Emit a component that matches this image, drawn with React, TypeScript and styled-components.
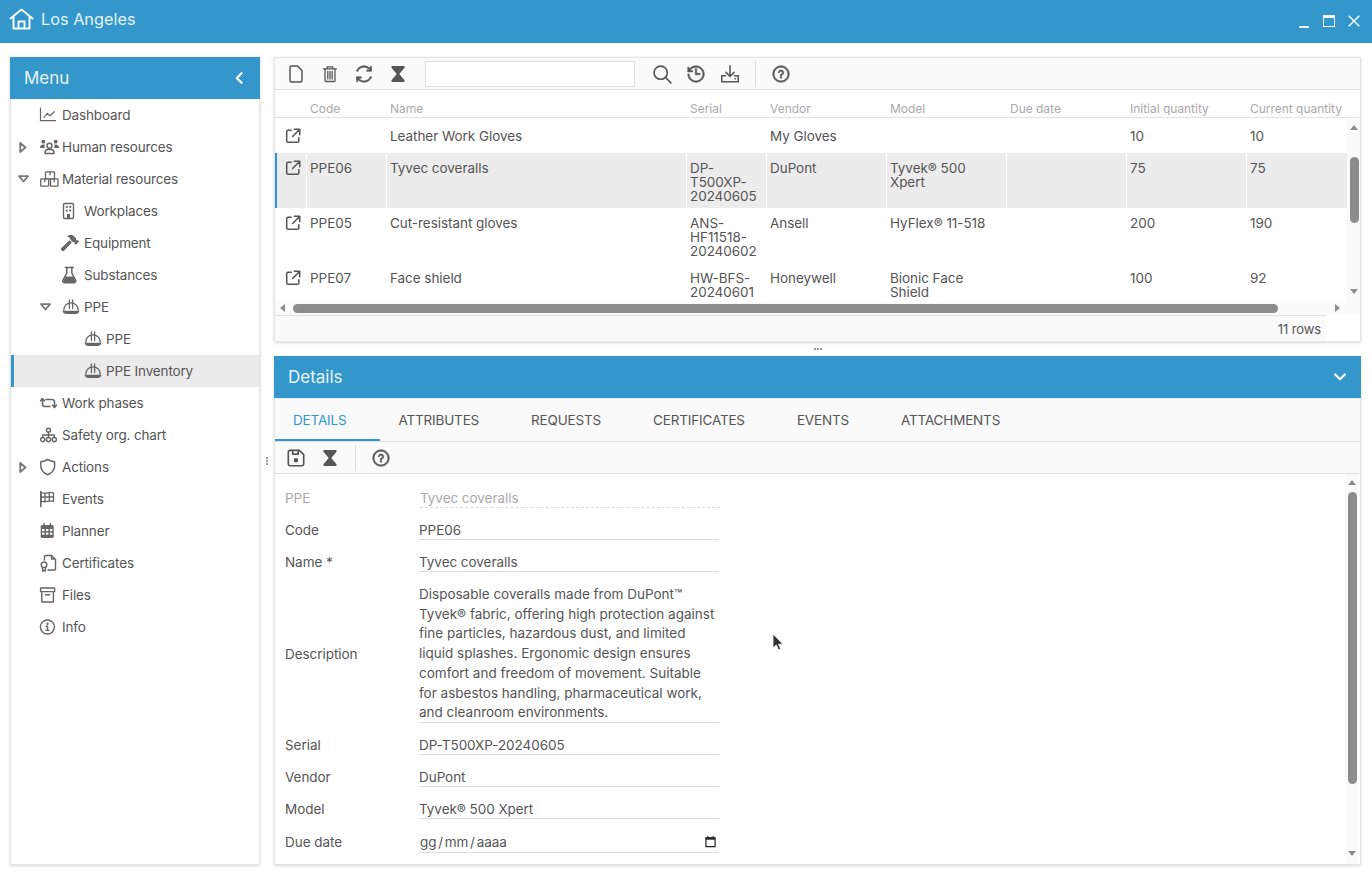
import React from "react";
import styled, { createGlobalStyle } from "styled-components";
import { FaHammer } from "react-icons/fa";
import { LiaSyncSolid, LiaHistorySolid, LiaQuestionCircle } from "react-icons/lia";

const Global = createGlobalStyle`
  html, body { margin: 0; padding: 0; background: #fff; }
  body { font-family: Inter, "Open Sans", sans-serif; color: #555; overflow: hidden; }
  * { box-sizing: border-box; }
`;

const Page = styled.div`
  position: relative;
  width: 1372px;
  height: 873px;
  display: flex;
  flex-direction: column;
`;
const TitleBar = styled.header`
  height: 43px;
  background: #3397cc;
  color: #fff;
  display: flex;
  align-items: center;
  padding: 0 12px 5px 9px;
  flex: none;
`;
const Title = styled.div`
  font-size: 16.3px;
  margin-left: 7px;
  color: #e6f3fa;
  flex: 1;
`;
const WinButtons = styled.div`
  display: flex;
  gap: 13px;
  align-items: center;
  padding-top: 3px;
`;
const Main = styled.main`
  flex: 1;
  display: flex;
  padding: 14px 11px 8px 10px;
  min-height: 0;
`;
const Sidebar = styled.aside`
  width: 250px;
  flex: none;
  display: flex;
  flex-direction: column;
  border: 1px solid #e4e4e4;
  border-top: 0;
  box-shadow: 0 1px 3px rgba(0, 0, 0, 0.16);
  background: #fff;
`;
const BlueHead = styled.div`
  height: 42px;
  flex: none;
  background: #3397cc;
  color: #e9f4fa;
  display: flex;
  align-items: center;
  justify-content: space-between;
  font-size: 17px;
`;
const MenuHead = styled(BlueHead)`
  margin: 0 -1px;
  padding: 0 17px 0 14px;
`;
const DetailsHead = styled(BlueHead)`
  padding: 0 15px 0 14px;
  margin: 0 -1px;
`;
const TreeRow = styled.div<{ $level: number; $active?: boolean }>`
  height: 32px;
  display: flex;
  align-items: center;
  font-size: 13.5px;
  letter-spacing: -0.15px;
  color: #555;
  padding-left: ${(p) => 5 + p.$level * 22}px;
  background: ${(p) => (p.$active ? "#ebebeb" : "transparent")};
  box-shadow: ${(p) => (p.$active ? "inset 3px 0 0 #3397cc" : "none")};
`;
const CaretSlot = styled.span`
  width: 24px;
  display: flex;
  justify-content: center;
  padding-right: 10px;
  flex: none;
`;
const TreeIcon = styled.span`
  width: 22px;
  height: 20px;
  flex: none;
  display: flex;
  align-items: center;
  color: #666;
  margin-left: -1px;
  margin-right: 1px;
`;
const VSplit = styled.div`
  width: 14px;
  flex: none;
  display: flex;
  flex-direction: column;
  align-items: center;
  justify-content: center;
  gap: 1px;
`;
const HSplit = styled.div`
  height: 14px;
  flex: none;
  display: flex;
  align-items: center;
  justify-content: center;
  gap: 1px;
`;
const Dot = styled.i`
  width: 2px;
  height: 2px;
  background: #999;
  display: block;
`;
const RightCol = styled.div`
  flex: 1;
  min-width: 0;
  display: flex;
  flex-direction: column;
`;
const Panel = styled.section`
  border: 1px solid #e4e4e4;
  border-top: 0;
  box-shadow: 0 1px 3px rgba(0, 0, 0, 0.14);
  display: flex;
  flex-direction: column;
  background: #fff;
`;
const GridPanel = styled(Panel)`
  height: 285px;
  flex: none;
  border-top: 1px solid #e4e4e4;
`;
const DetailPanel = styled(Panel)`
  flex: 1;
  min-height: 0;
`;
const Toolbar = styled.div`
  height: 32px;
  flex: none;
  background: #fafafa;
  border-bottom: 1px solid #e0e0e0;
  display: flex;
  align-items: center;
  padding-left: 4px;
`;
const ToolBtn = styled.span`
  width: 34px;
  height: 30px;
  flex: none;
  display: flex;
  align-items: center;
  justify-content: center;
  color: #555;
  font-size: 22px;
`;
const ThickBtn = styled(ToolBtn)`
  svg { stroke: currentColor; stroke-width: 0.9; }
`;
const SearchBox = styled.input`
  width: 210px;
  height: 26px;
  margin: 0 10px;
  border: 1px solid #e0e0e0;
  background: #fff;
  outline: 0;
`;
const Sep = styled.span`
  width: 1px;
  height: 26px;
  margin: 0 8px;
  background: #ddd;
  flex: none;
`;
const HeadRow = styled.div`
  height: 28px;
  flex: none;
  display: grid;
  grid-template-columns: 32px 80px 300px 80px 120px 120px 120px 120px 100px;
  border-bottom: 1px solid #e2e2e2;
  width: 100%;
`;
const HeadCell = styled.div`
  font-size: 12px;
  letter-spacing: -0.02px;
  color: #aaa;
  padding: 11px 0 0 3px;
  white-space: nowrap;
`;
const BodyWrap = styled.div`
  height: 185px;
  flex: none;
  display: flex;
`;
const Rows = styled.div`
  flex: 1;
  overflow: hidden;
`;
const Row = styled.div<{ $selected?: boolean; $height: number; $pad?: number }>`
  display: grid;
  grid-template-columns: 32px 80px 300px 80px 120px 120px 120px 120px 100px;
  height: ${(p) => p.$height}px;
  padding-top: ${(p) => p.$pad ?? 0}px;
  background: ${(p) => (p.$selected ? "#ececec" : "#fff")};
  box-shadow: ${(p) => (p.$selected ? "inset 2px 0 0 #3397cc" : "none")};
`;
const Cell = styled.div<{ $selected?: boolean }>`
  font-size: 13.5px;
  letter-spacing: -0.05px;
  line-height: 14px;
  color: #555;
  padding: 8px 6px 0 3px;
  border-right: 1px solid ${(p) => (p.$selected ? "#fff" : "transparent")};
  &:last-child { border-right: 0; }
`;
const LinkCell = styled(Cell)`
  padding: 6px 0 0 9px;
  line-height: 0;
  color: #555;
`;
const VTrack = styled.div<{ $inset?: boolean }>`
  width: 13px;
  flex: none;
  background: #fafafa;
  position: relative;
  margin-right: ${(p) => (p.$inset ? 2 : 0)}px;
`;
const VThumb = styled.div<{ $top: number; $h: number }>`
  position: absolute;
  left: 3px;
  top: ${(p) => p.$top}px;
  height: ${(p) => p.$h}px;
  width: 9px;
  background: #8c8c8c;
  border-radius: 5px;
`;
const ArrowUp = styled.i<{ $top: number }>`
  position: absolute;
  left: 3px;
  top: ${(p) => p.$top}px;
  border-left: 4.5px solid transparent;
  border-right: 4.5px solid transparent;
  border-bottom: 5px solid #8c8c8c;
`;
const ArrowDown = styled.i<{ $bottom: number }>`
  position: absolute;
  left: 3px;
  bottom: ${(p) => p.$bottom}px;
  border-left: 4.5px solid transparent;
  border-right: 4.5px solid transparent;
  border-top: 5px solid #8c8c8c;
`;
const HTrack = styled.div`
  height: 12px;
  flex: none;
  position: relative;
  background: #fafafa;
`;
const HThumb = styled.div`
  position: absolute;
  left: 18px;
  top: 1px;
  width: 985px;
  height: 9px;
  background: #8c8c8c;
  border-radius: 5px;
`;
const ArrowLeft = styled.i`
  position: absolute;
  left: 5px;
  top: 1px;
  border-top: 4.5px solid transparent;
  border-bottom: 4.5px solid transparent;
  border-right: 5px solid #8c8c8c;
`;
const ArrowRight = styled.i`
  position: absolute;
  right: 20px;
  top: 1px;
  border-top: 4.5px solid transparent;
  border-bottom: 4.5px solid transparent;
  border-left: 5px solid #8c8c8c;
`;
const FooterWrap = styled.div`
  flex: 1;
  display: flex;
`;
const Footer = styled.div`
  width: 1051px;
  background: #fafafa;
  border-top: 1px solid #e0e0e0;
  display: flex;
  align-items: center;
  justify-content: flex-end;
  padding-right: 5px;
  font-size: 13px;
  letter-spacing: -0.1px;
  color: #555;
`;
const Tabs = styled.div`
  height: 44px;
  flex: none;
  background: #fafafa;
  border-bottom: 1px solid #e0e0e0;
  border-top: 1px solid #eee;
  display: flex;
`;
const Tab = styled.div<{ $active?: boolean }>`
  padding: 13px 34px 0 18px;
  font-size: 13.5px;
  letter-spacing: -0.17px;
  color: ${(p) => (p.$active ? "#3397cc" : "#555")};
  box-shadow: ${(p) => (p.$active ? "inset 0 -2px 0 #3397cc" : "none")};
`;
const FormWrap = styled.div`
  flex: 1;
  min-height: 0;
  display: flex;
`;
const Form = styled.div`
  flex: 1;
  padding: 8px 0 0 10px;
`;
const FormRow = styled.div<{ $tall?: boolean }>`
  display: flex;
  align-items: center;
  min-height: ${(p) => (p.$tall ? 34 : 32)}px;
  font-size: 13.5px;
  letter-spacing: -0.05px;
`;
const Label = styled.div<{ $muted?: boolean }>`
  width: 134px;
  flex: none;
  color: ${(p) => (p.$muted ? "#aaa" : "#555")};
`;
const Value = styled.div<{ $muted?: boolean }>`
  width: 300px;
  height: 20px;
  line-height: 20px;
  margin-left: ${(p) => (p.$muted ? 1 : 0)}px;
  border-bottom: 1px ${(p) => (p.$muted ? "dashed" : "solid")} #dcdcdc;
  color: ${(p) => (p.$muted ? "#aaa" : "#555")};
`;
const TextValue = styled.div`
  width: 300px;
  height: 140px;
  margin: 5px 0 6px;
  padding-top: 2px;
  border-bottom: 1px solid #dcdcdc;
  color: #555;
`;
const TextLine = styled.div`
  line-height: 19.7px;
  white-space: nowrap;
  letter-spacing: 0;
`;
const DateValue = styled(Value)`
  display: flex;
  justify-content: space-between;
  align-items: center;
  height: 22px;
  padding: 0 3px 0 1px;
  word-spacing: -2px;
`;
const CursorMark = styled.svg`
  position: absolute;
  left: 772px;
  top: 633px;
`;

const Ic = ({ children, size = 20, sw = 1.5 }: { children: React.ReactNode; size?: number; sw?: number }) => (
  <svg width={size} height={size} viewBox="0 0 20 20" fill="none" stroke="currentColor" strokeWidth={sw} strokeLinecap="round" strokeLinejoin="round">
    {children}
  </svg>
);

const Caret = ({ open }: { open?: boolean }) =>
  open ? (
    <svg width="11" height="8" viewBox="0 0 11 8">
      <path d="M1 1.2h9L5.5 6.5z" fill="none" stroke="#777" strokeWidth="1.8" strokeLinejoin="round" />
    </svg>
  ) : (
    <svg width="8" height="11" viewBox="0 0 8 11">
      <path d="M1.2 1l5.3 4.5L1.2 10z" fill="none" stroke="#777" strokeWidth="1.8" strokeLinejoin="round" />
    </svg>
  );

const ChartIcon = () => (
  <Ic sw={1.2}><path d="M1.5 3V15.7H16.5" /><path d="M5 12.3L8.3 8.3L11 10.7L15.3 6.7" /></Ic>
);
const UsersIcon = () => (
  <Ic sw={1.4}>
    <circle cx="10.5" cy="8.7" r="2.5" />
    <path d="M6 16.5v-1a3 3 0 0 1 3-3h3a3 3 0 0 1 3 3v1z" />
    <circle cx="4.3" cy="4.7" r="1.9" fill="currentColor" stroke="none" />
    <circle cx="16.7" cy="4.7" r="1.9" fill="currentColor" stroke="none" />
    <path d="M1 11c0-2 1-3.5 3.5-3.5h1c-.3 1 0 2 .5 3-.5.2-.8.4-1 .5z" fill="currentColor" stroke="none" />
    <path d="M20 11c0-2-1-3.5-3.5-3.5h-1c.3 1 0 2-.5 3 .5.2.8.4 1 .5z" fill="currentColor" stroke="none" />
  </Ic>
);
const BoxesIcon = () => (
  <Ic sw={1.3}>
    <rect x="6.5" y="2.8" width="9" height="7" rx=".8" />
    <path d="M11 2.8v3" />
    <rect x="1.7" y="9.8" width="8" height="7.4" rx=".8" />
    <path d="M5.7 9.8v3" />
    <rect x="11.5" y="9.8" width="7.5" height="7.4" rx=".8" />
    <path d="M15.2 9.8v3" />
  </Ic>
);
const BuildingIcon = () => (
  <Ic sw={1.4}>
    <rect x="2.5" y="2.5" width="10" height="15" rx="1.2" />
    <g fill="currentColor" stroke="none">
      <rect x="4.8" y="5" width="1.9" height="1.9" />
      <rect x="8.3" y="5" width="1.9" height="1.9" />
      <rect x="4.8" y="8.6" width="1.9" height="1.9" />
      <rect x="8.3" y="8.6" width="1.9" height="1.9" />
      <rect x="6" y="13" width="3" height="4.5" />
    </g>
  </Ic>
);
const FlaskIcon = () => (
  <Ic sw={1.5}>
    <path d="M4.3 2.5H12.3" />
    <path d="M5.8 2.5V8L1.9 15.4A1.6 1.6 0 0 0 3.3 17.7H13.3A1.6 1.6 0 0 0 14.7 15.4L10.8 8V2.5" />
    <path d="M4.4 11.5H12.3L14.3 16.6 13.3 17.7H3.3L2.3 16.6z" fill="currentColor" stroke="none" />
  </Ic>
);
const HatIcon = () => (
  <Ic sw={1.3}>
    <path d="M2.8 13a7.2 7.2 0 0 1 14.4 0" />
    <path d="M8.4 11.5V3M11.6 11.5V3" />
    <path d="M1.5 13.8H18.5C18 16 16.5 17 14.5 17H5.5C3.5 17 2 16 1.5 13.8z" fill="currentColor" stroke="none" />
  </Ic>
);
const PhasesIcon = () => (
  <Ic sw={1.6}>
    <path d="M3.5 6V11a2.5 2.5 0 0 0 2.5 2.5H11" />
    <path d="M1.6 7.8L3.5 5.6L5.4 7.8" />
    <path d="M7 6.5H13a2.5 2.5 0 0 1 2.5 2.5V14" />
    <path d="M13.6 12.2L15.5 14.4L17.4 12.2" />
  </Ic>
);
const OrgIcon = () => (
  <Ic sw={1.4}>
    <circle cx="9.5" cy="5.3" r="2" />
    <circle cx="3.7" cy="14.6" r="2.1" />
    <circle cx="9.5" cy="14.6" r="2.1" />
    <circle cx="15.3" cy="14.6" r="2.1" />
    <path d="M9.5 7.3V12.5M3.7 12.5V10H15.3V12.5" />
  </Ic>
);
const ShieldIcon = () => (
  <Ic sw={1.5}>
    <path d="M8.7 2.5C11 4 13 4.5 15.6 4.7V9C15.6 13 12.6 16 8.7 17.7 4.8 16 1.8 13 1.8 9V4.7C4.4 4.5 6.4 4 8.7 2.5z" />
  </Ic>
);
const FlagIcon = () => (
  <Ic sw={1.3}>
    <path d="M1.9 2.5V17.5" strokeWidth="1.6" />
    <path d="M2 3.5q3 1.2 6 .3t6.5 0v8.5q-3-.8-6.5 0t-6 0z" />
    <path d="M6 4.2V12.8M10.3 3.6V12.2M2 8H14.5" />
  </Ic>
);
const CalendarIcon = () => (
  <Ic sw={1.4}>
    <rect x="1.7" y="4" width="13" height="13" rx="1.5" fill="currentColor" stroke="none" />
    <path d="M5 2.5V5M11.4 2.5V5" />
    <g fill="#fff" stroke="none">
      <rect x="3.1" y="8" width="2.4" height="2.1" />
      <rect x="7" y="8" width="2.4" height="2.1" />
      <rect x="10.9" y="8" width="2.4" height="2.1" />
      <rect x="3.1" y="11.6" width="2.4" height="2.1" />
      <rect x="7" y="11.6" width="2.4" height="2.1" />
      <rect x="10.9" y="11.6" width="2.4" height="2.1" />
    </g>
  </Ic>
);
const CertIcon = () => (
  <Ic sw={1.4}>
    <path d="M5.5 7V3.5a1 1 0 0 1 1-1H12.5L16.5 6.5V16a1 1 0 0 1-1 1H9" />
    <path d="M12.5 2.5V6H15" />
    <circle cx="5" cy="11.8" r="2.8" />
    <path d="M3.6 14.5V18.2L5 17.2 6.4 18.2V14.5" />
  </Ic>
);
const ArchiveIcon = () => (
  <Ic sw={1.4}>
    <rect x="1.6" y="3" width="14" height="3.6" />
    <path d="M2.8 6.6V17H14.4V6.6M6.5 9.8H10.7" />
  </Ic>
);
const InfoIcon = () => (
  <Ic sw={1.4}>
    <circle cx="8.4" cy="10" r="7" />
    <path d="M8.5 9.3V13.4M7.2 9.3H8.5M7 13.4H10" />
    <circle cx="8.5" cy="6.8" r=".5" />
  </Ic>
);
const FileIcon = () => (
  <Ic size={20}><path d="M5.5 2H11.5L16 6.5V16.5A1.5 1.5 0 0 1 14.5 18H5.5A1.5 1.5 0 0 1 4 16.5V3.5A1.5 1.5 0 0 1 5.5 2z" /></Ic>
);
const TrashIcon = () => (
  <Ic size={20} sw={1.3}>
    <path d="M3.5 4.8H16.5M7.3 4.8V2.8H12.7V4.8" />
    <path d="M5 4.8V16.5A1 1 0 0 0 6 17.5H14A1 1 0 0 0 15 16.5V4.8" />
    <path d="M7.8 7.5V15M10 7.5V15M12.2 7.5V15" />
  </Ic>
);
const HourglassIcon = () => (
  <svg width="22" height="22" viewBox="0 0 22 22" fill="currentColor">
    <path d="M4.5 3H17.5V4.8L12.3 11 17.5 17.2V19H4.5V17.2L9.7 11 4.5 4.8z" />
  </svg>
);
const SearchIcon = () => (
  <Ic size={22} sw={1.5}><circle cx="8.8" cy="8.8" r="6" /><path d="M13.2 13.2L18 18" /></Ic>
);
const DownloadIcon = () => (
  <Ic size={22} sw={1.4}>
    <path d="M10 2.5V12M6.3 8.5L10 12.2L13.7 8.5" />
    <path d="M6 11.5H2.5V17H17.5V11.5H14" />
    <path d="M14.5 14.3H15" />
  </Ic>
);
const SaveIcon = () => (
  <Ic size={22} sw={1.5}>
    <path d="M4.5 3H13L17 7V15.5A1.5 1.5 0 0 1 15.5 17H4.5A1.5 1.5 0 0 1 3 15.5V4.5A1.5 1.5 0 0 1 4.5 3z" />
    <path d="M7 3V6.5H12V3" />
    <circle cx="10" cy="12" r="1.3" fill="currentColor" />
  </Ic>
);
const LinkIcon = () => (
  <Ic size={18} sw={1.7}>
    <path d="M8 3.5H4.5A1.5 1.5 0 0 0 3 5V15.5A1.5 1.5 0 0 0 4.5 17H15A1.5 1.5 0 0 0 16.5 15.5V12" />
    <path d="M9.5 10.5L17 3M11.5 2.5H17.5V8.5" />
  </Ic>
);
const HomeIcon = () => (
  <svg width="25" height="22" viewBox="0 0 25 22" fill="none" stroke="#f4fafd" strokeWidth="2" strokeLinecap="round" strokeLinejoin="round">
    <path d="M1.5 10.5L12.5 1.5L23.5 10.5" />
    <path d="M4.5 9V20.5H20.5V9" />
    <path d="M9.5 20.5V13.5H15.5V20.5" />
  </svg>
);
const ChevronLeft = () => (
  <svg width="8" height="12" viewBox="0 0 8 12" fill="none" stroke="#fff" strokeWidth="2.2" strokeLinecap="round" strokeLinejoin="round"><path d="M6.5 1.2L1.8 6L6.5 10.8" /></svg>
);
const ChevronDown = () => (
  <svg width="12" height="8" viewBox="0 0 12 8" fill="none" stroke="#fff" strokeWidth="2.2" strokeLinecap="round" strokeLinejoin="round"><path d="M1.2 1.5L6 6.2L10.8 1.5" /></svg>
);
const HammerIcon = () => <FaHammer size={18} />;

const tree: [number, boolean | null, React.ComponentType, string, boolean?][] = [
  [0, null, ChartIcon, "Dashboard"],
  [0, false, UsersIcon, "Human resources"],
  [0, true, BoxesIcon, "Material resources"],
  [1, null, BuildingIcon, "Workplaces"],
  [1, null, HammerIcon, "Equipment"],
  [1, null, FlaskIcon, "Substances"],
  [1, true, HatIcon, "PPE"],
  [2, null, HatIcon, "PPE"],
  [2, null, HatIcon, "PPE Inventory", true],
  [0, null, PhasesIcon, "Work phases"],
  [0, null, OrgIcon, "Safety org. chart"],
  [0, false, ShieldIcon, "Actions"],
  [0, null, FlagIcon, "Events"],
  [0, null, CalendarIcon, "Planner"],
  [0, null, CertIcon, "Certificates"],
  [0, null, ArchiveIcon, "Files"],
  [0, null, InfoIcon, "Info"],
];

const headers = ["", "Code", "Name", "Serial", "Vendor", "Model", "Due date", "Initial quantity", "Current quantity"];
const rows = [
  { h: 35, pad: 3, cells: ["", "Leather Work Gloves", "", "My Gloves", "", "", "10", "10"] },
  { h: 55, sel: true, cells: ["PPE06", "Tyvec coveralls", "DP-T500XP-20240605", "DuPont", "Tyvek® 500 Xpert", "", "75", "75"] },
  { h: 55, cells: ["PPE05", "Cut-resistant gloves", "ANS-HF11518-20240602", "Ansell", "HyFlex® 11-518", "", "200", "190"] },
  { h: 55, cells: ["PPE07", "Face shield", "HW-BFS-20240601", "Honeywell", "Bionic Face Shield", "", "100", "92"] },
];
const tabs = ["DETAILS", "ATTRIBUTES", "REQUESTS", "CERTIFICATES", "EVENTS", "ATTACHMENTS"];
const description = [
  "Disposable coveralls made from DuPont™",
  "Tyvek® fabric, offering high protection against",
  "fine particles, hazardous dust, and limited",
  "liquid splashes. Ergonomic design ensures",
  "comfort and freedom of movement. Suitable",
  "for asbestos handling, pharmaceutical work,",
  "and cleanroom environments.",
];

export default function App() {
  return (
    <Page>
      <Global />
      <TitleBar>
        <HomeIcon />
        <Title>Los Angeles</Title>
        <WinButtons>
          <svg width="12" height="14" viewBox="0 0 12 14"><rect x="1" y="12" width="10" height="2" fill="#f2f8fc" /></svg>
          <svg width="12" height="12" viewBox="0 0 12 12"><rect x=".5" y=".5" width="11" height="11" fill="none" stroke="#f2f8fc" /><rect x="0" y="0" width="12" height="3" fill="#f2f8fc" /></svg>
          <svg width="12" height="12" viewBox="0 0 12 12"><path d="M.7.7l10.6 10.6M11.3.7L.7 11.3" stroke="#f2f8fc" strokeWidth="1.5" /></svg>
        </WinButtons>
      </TitleBar>
      <Main>
        <Sidebar>
          <MenuHead>
            Menu
            <ChevronLeft />
          </MenuHead>
          {tree.map(([level, caret, Icon, label, active], i) => (
            <TreeRow key={i} $level={level} $active={active}>
              <CaretSlot>{caret === null ? null : <Caret open={caret} />}</CaretSlot>
              <TreeIcon><Icon /></TreeIcon>
              {label}
            </TreeRow>
          ))}
        </Sidebar>
        <VSplit><Dot /><Dot /><Dot /></VSplit>
        <RightCol>
          <GridPanel>
            <Toolbar>
              <ToolBtn><FileIcon /></ToolBtn>
              <ToolBtn><TrashIcon /></ToolBtn>
              <ThickBtn><LiaSyncSolid /></ThickBtn>
              <ToolBtn><HourglassIcon /></ToolBtn>
              <SearchBox readOnly />
              <ToolBtn><SearchIcon /></ToolBtn>
              <ThickBtn><LiaHistorySolid /></ThickBtn>
              <ToolBtn><DownloadIcon /></ToolBtn>
              <Sep />
              <ThickBtn><LiaQuestionCircle /></ThickBtn>
            </Toolbar>
            <HeadRow>
              {headers.map((h, i) => <HeadCell key={i}>{h}</HeadCell>)}
            </HeadRow>
            <BodyWrap>
              <Rows>
                {rows.map((r, i) => (
                  <Row key={i} $selected={r.sel} $height={r.h} $pad={r.pad}>
                    <LinkCell $selected={r.sel}><LinkIcon /></LinkCell>
                    {r.cells.map((c, j) => <Cell key={j} $selected={r.sel}>{c}</Cell>)}
                  </Row>
                ))}
              </Rows>
              <VTrack>
                <ArrowUp $top={7} />
                <VThumb $top={39} $h={66} />
                <ArrowDown $bottom={9} />
              </VTrack>
            </BodyWrap>
            <HTrack>
              <ArrowLeft />
              <HThumb />
              <ArrowRight />
            </HTrack>
            <FooterWrap>
              <Footer>11 rows</Footer>
            </FooterWrap>
          </GridPanel>
          <HSplit><Dot /><Dot /><Dot /></HSplit>
          <DetailPanel>
            <DetailsHead>
              Details
              <ChevronDown />
            </DetailsHead>
            <Tabs>
              {tabs.map((t, i) => <Tab key={t} $active={i === 0}>{t}</Tab>)}
            </Tabs>
            <Toolbar>
              <ToolBtn><SaveIcon /></ToolBtn>
              <ToolBtn><HourglassIcon /></ToolBtn>
              <Sep />
              <ThickBtn><LiaQuestionCircle /></ThickBtn>
            </Toolbar>
            <FormWrap>
              <Form>
                <FormRow><Label $muted>PPE</Label><Value $muted>Tyvec coveralls</Value></FormRow>
                <FormRow><Label>Code</Label><Value>PPE06</Value></FormRow>
                <FormRow><Label>Name *</Label><Value>Tyvec coveralls</Value></FormRow>
                <FormRow>
                  <Label>Description</Label>
                  <TextValue>
                    {description.map((t) => <TextLine key={t}>{t}</TextLine>)}
                  </TextValue>
                </FormRow>
                <FormRow><Label>Serial</Label><Value>DP-T500XP-20240605</Value></FormRow>
                <FormRow><Label>Vendor</Label><Value>DuPont</Value></FormRow>
                <FormRow><Label>Model</Label><Value>Tyvek® 500 Xpert</Value></FormRow>
                <FormRow $tall>
                  <Label>Due date</Label>
                  <DateValue>
                    gg / mm / aaaa
                    <svg width="11" height="13" viewBox="0 0 12 13">
                      <path d="M1 2.5h10V12H1z" fill="none" stroke="#222" strokeWidth="1.3" />
                      <rect x="1" y="2" width="10" height="2.5" fill="#222" />
                      <path d="M3 .5v2M9 .5v2" stroke="#222" strokeWidth="1.2" />
                    </svg>
                  </DateValue>
                </FormRow>
              </Form>
              <VTrack $inset>
                <ArrowUp $top={6} />
                <VThumb $top={18} $h={292} />
                <ArrowDown $bottom={8} />
              </VTrack>
            </FormWrap>
          </DetailPanel>
        </RightCol>
      </Main>
      <CursorMark width="12" height="19" viewBox="0 0 12 19">
        <path d="M1 1v14l3.3-3 2.2 5 2.2-1-2.2-4.8H11z" fill="#333" stroke="#fff" strokeWidth=".8" />
      </CursorMark>
    </Page>
  );
}
